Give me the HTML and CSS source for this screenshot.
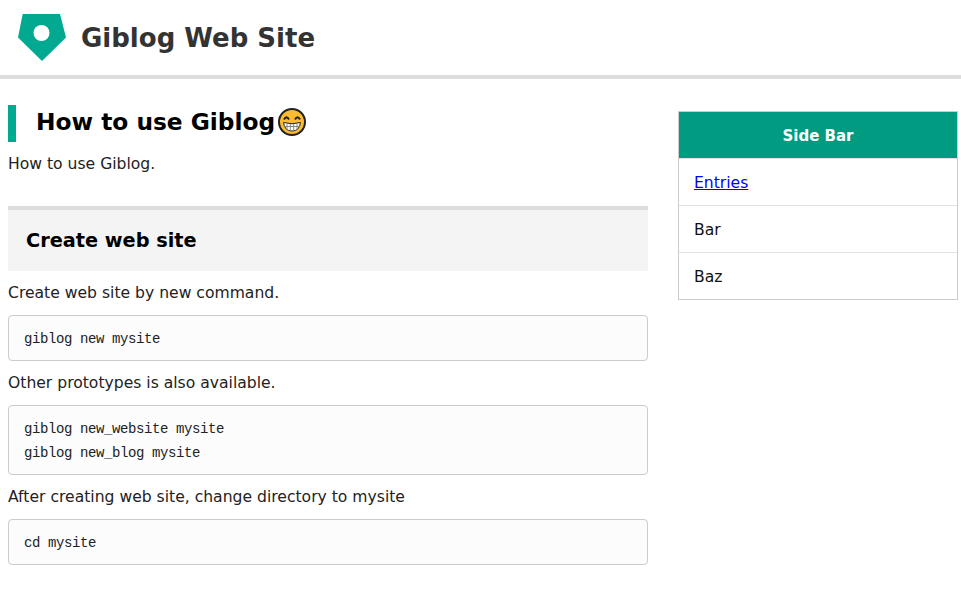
FILE: index.html
```html
<!DOCTYPE html>
<html lang="en">
<head>
<meta charset="utf-8">
<title>Giblog Web Site</title>
<link rel="stylesheet" href="styles.css">
</head>
<body>
<header class="site-header">
  <svg class="logo" viewBox="0 0 48 47" width="48" height="47" aria-hidden="true">
    <path class="logo-shape" d="M4.700 0H42L48 23.500 24 47 0 23.500Z"/>
    <circle class="logo-hole" cx="23.500" cy="19" r="8"/>
  </svg>
  <div class="site-title">Giblog Web Site</div>
</header>
<div class="page">
  <main class="content">
    <h1 class="title">How to use Giblog<svg class="emoji" viewBox="0 0 30 30" width="30" height="30" aria-hidden="true">
      <circle class="emoji-face" cx="15" cy="15" r="13"/>
      <path class="emoji-eye" d="M7 12.500Q9.500 8 12 12.500M18 12.500Q20.500 8 23 12.500"/>
      <path class="emoji-teeth" d="M6.500 15.500Q15 18 23.500 15.500Q22.500 24 15 24Q7.500 24 6.500 15.500Z"/>
      <path class="emoji-gap" d="M6.800 19.500H23.200M10 16.500V23M13.300 17V24M16.700 17V24M20 16.500V23"/>
    </svg></h1>
    <p class="text intro">How to use Giblog.</p>
    <h2 class="section">Create web site</h2>
    <p class="text">Create web site by new command.</p>
    <pre class="code">giblog new mysite</pre>
    <p class="text">Other prototypes is also available.</p>
    <pre class="code">giblog new_website mysite
giblog new_blog mysite</pre>
    <p class="text">After creating web site, change directory to mysite</p>
    <pre class="code">cd mysite</pre>
  </main>
  <aside class="side">
    <div class="side-head">Side Bar</div>
    <div class="side-item"><a href="#">Entries</a></div>
    <div class="side-item">Bar</div>
    <div class="side-item">Baz</div>
  </aside>
</div>
</body>
</html>
```
FILE: styles.css
```css
* { box-sizing: border-box; }
html, body { margin: 0; padding: 0; }
body {
  background: #fff;
  color: #222;
  font-family: "DejaVu Sans", "Noto Sans", sans-serif;
  font-size: 15.600px;
  line-height: 24px;
}
.site-header {
  display: flex;
  align-items: center;
  gap: 15px;
  height: 79px;
  padding: 0 0 0 18px;
  border-bottom: 4px solid #ddd;
}
.logo { display: block; }
.logo-shape { fill: #00a98f; }
.logo-hole { fill: #fff; }
.site-title {
  font-size: 26px;
  font-weight: 700;
  color: #333;
}
.page {
  display: flex;
  align-items: flex-start;
  gap: 30px;
  padding: 26px 3px 0 8px;
}
.content { width: 640px; }
.title {
  display: flex;
  align-items: center;
  height: 37px;
  margin: 0;
  padding: 0 0 3px 20px;
  border-left: 8px solid #00a98f;
  font-size: 23.300px;
  font-weight: 700;
  color: #000;
}
.emoji { display: block; margin-left: 2px; }
.emoji-face { fill: #fdbb30; stroke: #222; stroke-width: 2; }
.emoji-eye { fill: none; stroke: #222; stroke-width: 2; }
.emoji-teeth { fill: #fff; stroke: #222; stroke-width: 1; }
.emoji-gap { fill: none; stroke: #888; stroke-width: 1; }
.text { margin: 0; height: 44px; padding-top: 10px; }
.intro { height: 64px; }
.section {
  display: flex;
  align-items: center;
  height: 65px;
  margin: 0;
  padding: 0 18px;
  background: #f4f4f4;
  border-top: 4px solid #ddd;
  font-size: 19.300px;
  font-weight: 700;
  color: #000;
}
.code {
  margin: 0;
  padding: 11px 15px 9px;
  background: #fcfcfc;
  border: 1px solid #ccc;
  border-radius: 4px;
  font-family: "Liberation Mono", monospace;
  font-size: 14px;
  letter-spacing: -0.400px;
  line-height: 24px;
  color: #222;
}
.side {
  width: 280px;
  margin-top: 6px;
  border: 1px solid #ccc;
  color: #111;
}
.side-head {
  height: 46px;
  padding-top: 1px;
  background: #009b80;
  color: #fff;
  font-size: 15px;
  font-weight: 700;
  line-height: 46px;
  text-align: center;
}
.side-item {
  height: 47px;
  padding: 12px 15px 0;
  border-top: 1px solid #e2e2e2;
}
.side-item a { color: #00f; }
```
